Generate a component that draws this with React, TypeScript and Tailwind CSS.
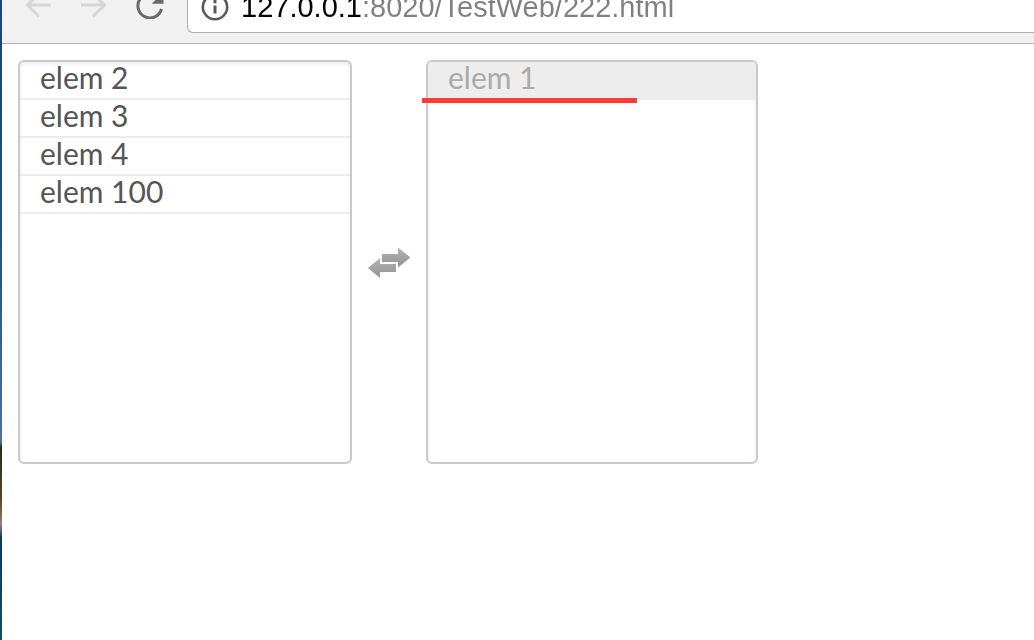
import { useState } from "react";

const ArrowIcon = ({ className = "" }: { className?: string }) => (
  <svg viewBox="0 0 28 28" className={`w-7 h-7 ${className}`} fill="none" stroke="#d6d6d6" strokeWidth="3">
    <path d="M27 14H3.500M15 2.500L3.500 14 15 25.500" />
  </svg>
);

const ReloadIcon = () => (
  <svg viewBox="0 0 28 28" className="w-7 h-7" fill="none">
    <path d="M25.500 18A12 12 0 1 1 22.800 6.800" stroke="#6a6a6a" strokeWidth="3" />
    <path d="M27.500 1v11.800H15.700z" fill="#6a6a6a" />
  </svg>
);

const InfoIcon = () => (
  <svg viewBox="0 0 28 28" className="w-7 h-7 shrink-0" fill="none">
    <circle cx="14" cy="14" r="12.2" stroke="#5a5a5a" strokeWidth="2.6" />
    <path d="M14 12.500v8M14 7v3.200" stroke="#5a5a5a" strokeWidth="3" />
  </svg>
);

const SwapIcon = () => (
  <svg viewBox="0 0 44 32" className="w-11 h-8">
    <defs>
      <linearGradient id="swap" x1="0" y1="0" x2="0" y2="1">
        <stop offset="0" stopColor="#b4b4b4" />
        <stop offset="1" stopColor="#929292" />
      </linearGradient>
    </defs>
    <path d="M15 8h16V1.500L43.500 11.500 31 21.500V16H15z" fill="url(#swap)" />
    <path d="M29 18v8H13V32L1 22 13 12v6z" fill="url(#swap)" />
  </svg>
);

const available = ["elem 2", "elem 3", "elem 4", "elem 100"];
const selected = ["elem 1"];

export default function App() {
  const [url, setUrl] = useState("127.0.0.1:8020/TestWeb/222.html");

  return (
    <div className="flex min-h-screen bg-white font-['Liberation_Sans',sans-serif]">
      {/* Desktop showing behind the window */}
      <div className="w-0.5 shrink-0 bg-[linear-gradient(#16487f_0%,#1d4f88_35%,#4a70a8_69%,#2c2a12_70%,#5a4420_78%,#9a8078_82%,#083a66_84%,#0a5068_100%)]" />

      <div className="flex-1 min-w-0">
        {/* Browser toolbar */}
        <header className="flex h-11 items-end overflow-hidden border-b border-[#b0b0b0] bg-[#f1f1f1] pb-2.5">
          <nav className="flex h-14 shrink-0 items-center gap-7 pl-[22px] pr-[23px]">
            <button aria-label="Back">
              <ArrowIcon />
            </button>
            <button aria-label="Forward">
              <ArrowIcon className="rotate-180" />
            </button>
            <button aria-label="Reload">
              <ReloadIcon />
            </button>
          </nav>
          <div className="flex h-13 min-w-0 flex-1 items-center gap-3 rounded-bl-md border border-r-0 border-[#b0b0b0] bg-white pl-[13px]">
            <InfoIcon />
            <input
              type="text"
              aria-label="Address"
              value={url}
              onChange={(e) => setUrl(e.target.value)}
              className="min-w-0 flex-1 bg-[linear-gradient(90deg,#000_121px,#808080_121px)] bg-clip-text text-[29px] leading-10 text-transparent caret-black outline-none"
            />
          </div>
        </header>

        {/* Transfer lists */}
        <main className="flex items-center px-4 py-4 font-['Lato',sans-serif] text-[30px] leading-[30px]">
          <ul className="h-[404px] w-[334px] rounded-md border-2 border-[#c9c9c9] text-[#555] shadow-[inset_0_2px_4px_rgba(0,0,0,0.08)]">
            {available.map((item) => (
              <li key={item} className="border-b-2 border-[#ededed]">
                <button className="block h-9 w-full px-5 pb-1.5 text-left">{item}</button>
              </li>
            ))}
          </ul>

          <button aria-label="Swap" className="mx-[15px] shrink-0">
            <SwapIcon />
          </button>

          <ul className="relative h-[404px] w-[332px] rounded-md border-2 border-[#c9c9c9] text-[#aaa] shadow-[inset_0_2px_4px_rgba(0,0,0,0.08)]">
            {selected.map((item) => (
              <li key={item} className="rounded-t-sm border-b-2 border-[#ededed] bg-[#ededed]">
                <button className="block h-9 w-full px-5 pb-1.5 text-left">{item}</button>
              </li>
            ))}
            {/* Red marker under the moved item */}
            <li aria-hidden="true" className="absolute -left-1.5 top-9 h-[5px] w-[215px] bg-[#ff3b38]" />
          </ul>
        </main>
      </div>
    </div>
  );
}
